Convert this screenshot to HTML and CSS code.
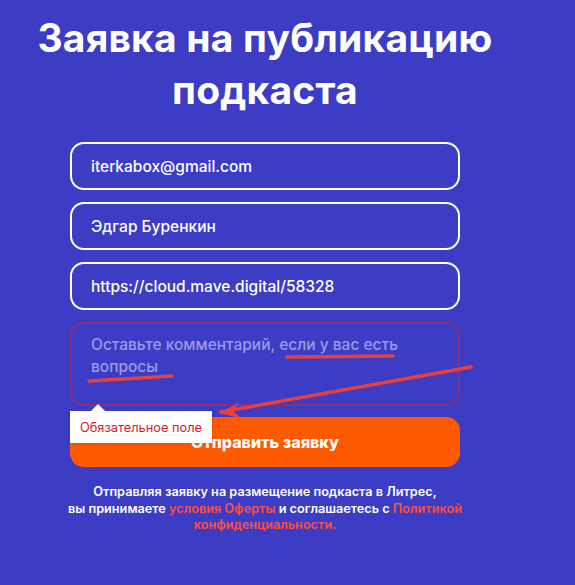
FILE: index.html
```html
<!DOCTYPE html>
<html lang="ru">
<head>
    <meta charset="UTF-8">
    <meta name="viewport" content="width=device-width, initial-scale=1.0">
    <title>Заявка на публикацию подкаста</title>
    <link rel="stylesheet" href="styles.css">
</head>
<body>
    <main class="page">
        <h1 class="page-title">Заявка на публикацию<br>подкаста</h1>

        <form class="request-form">
            <input class="form-input" type="email" value="iterkabox@gmail.com">
            <input class="form-input" type="text" value="Эдгар Буренкин">
            <input class="form-input" type="text" value="https://cloud.mave.digital/58328">

            <div class="comment-field">
                <textarea class="form-textarea" placeholder="Оставьте комментарий, если у вас есть вопросы"></textarea>
                <!-- browser validation bubble -->
                <div class="tooltip">Обязательное поле</div>
            </div>

            <button class="submit-btn" type="button">Отправить заявку</button>

            <p class="form-note">
                Отправляя заявку на размещение подкаста в Литрес,<br>
                вы принимаете <a href="#">условия Оферты</a> и соглашаетесь с <a href="#">Политикой</a><br>
                <a href="#">конфиденциальности.</a>
            </p>
        </form>

        <!-- hand-drawn annotation marks -->
        <svg class="marks" width="575" height="585" viewBox="0 0 575 585">
            <g stroke="#e8403f" stroke-width="3.5" stroke-linecap="round" fill="none">
                <path d="M287 357 L393 356"/>
                <path d="M89 381 L172 376"/>
                <path d="M471 367 L221 412"/>
            </g>
            <path d="M218 413 L239 403 L233 411 L241 418 Z" fill="#e8403f"/>
        </svg>
    </main>
</body>
</html>
```

FILE: styles.css
```css
body {
    margin: 0;
    background-color: #3d3cc5;
    font-family: Inter, "Noto Sans", sans-serif;
    color: #fff;
}
.page {
    position: relative;
    width: 530px;
    height: 585px;
    overflow: hidden;
}
.page-title {
    margin: 0;
    padding-top: 12px;
    font-size: 39px;
    line-height: 52px;
    font-weight: 700;
    text-align: center;
    letter-spacing: 0.2px;
}
.request-form {
    width: 390px;
    margin: 26px auto 0;
    display: flex;
    flex-direction: column;
}
.form-input {
    box-sizing: border-box;
    height: 48px;
    margin-bottom: 12px;
    padding: 0 19px;
    border: 2px solid #fff;
    border-radius: 14px;
    background: transparent;
    color: #fff;
    font-family: inherit;
    font-size: 15.5px;
    font-weight: 500;
}
.comment-field {
    position: relative;
}
.form-textarea {
    box-sizing: border-box;
    display: block;
    width: 100%;
    height: 84px;
    padding: 10px 19px;
    border: 2px solid #8a2d7b;
    border-radius: 14px;
    background: transparent;
    color: #fff;
    font-family: inherit;
    font-size: 15.5px;
    font-weight: 500;
    line-height: 22px;
    resize: none;
}
.form-textarea::placeholder {
    color: #9b9be6;
}
.tooltip {
    position: absolute;
    left: 0;
    top: 89px;
    z-index: 2;
    padding: 10px 10px 9px;
    background: #fff;
    color: #d8182b;
    font-size: 12.8px;
    line-height: 13px;
    box-shadow: 0 1px 4px rgba(0, 0, 0, 0.15);
}
.tooltip::before {
    content: "";
    position: absolute;
    left: 21px;
    top: -7px;
    border: 7px solid transparent;
    border-top: 0;
    border-bottom-color: #fff;
}
.submit-btn {
    height: 50px;
    margin-top: 11px;
    border: none;
    border-radius: 14px;
    background-color: #ff5a00;
    color: #fff;
    font-family: inherit;
    font-size: 16px;
    font-weight: 800;
}
.form-note {
    margin: 17px -10px 0;
    font-size: 12.7px;
    line-height: 16.5px;
    font-weight: 600;
    text-align: center;
    white-space: nowrap;
}
.form-note a {
    color: #ff4f3a;
    text-decoration: none;
}
.marks {
    position: absolute;
    left: 0;
    top: 0;
    pointer-events: none;
}
```
